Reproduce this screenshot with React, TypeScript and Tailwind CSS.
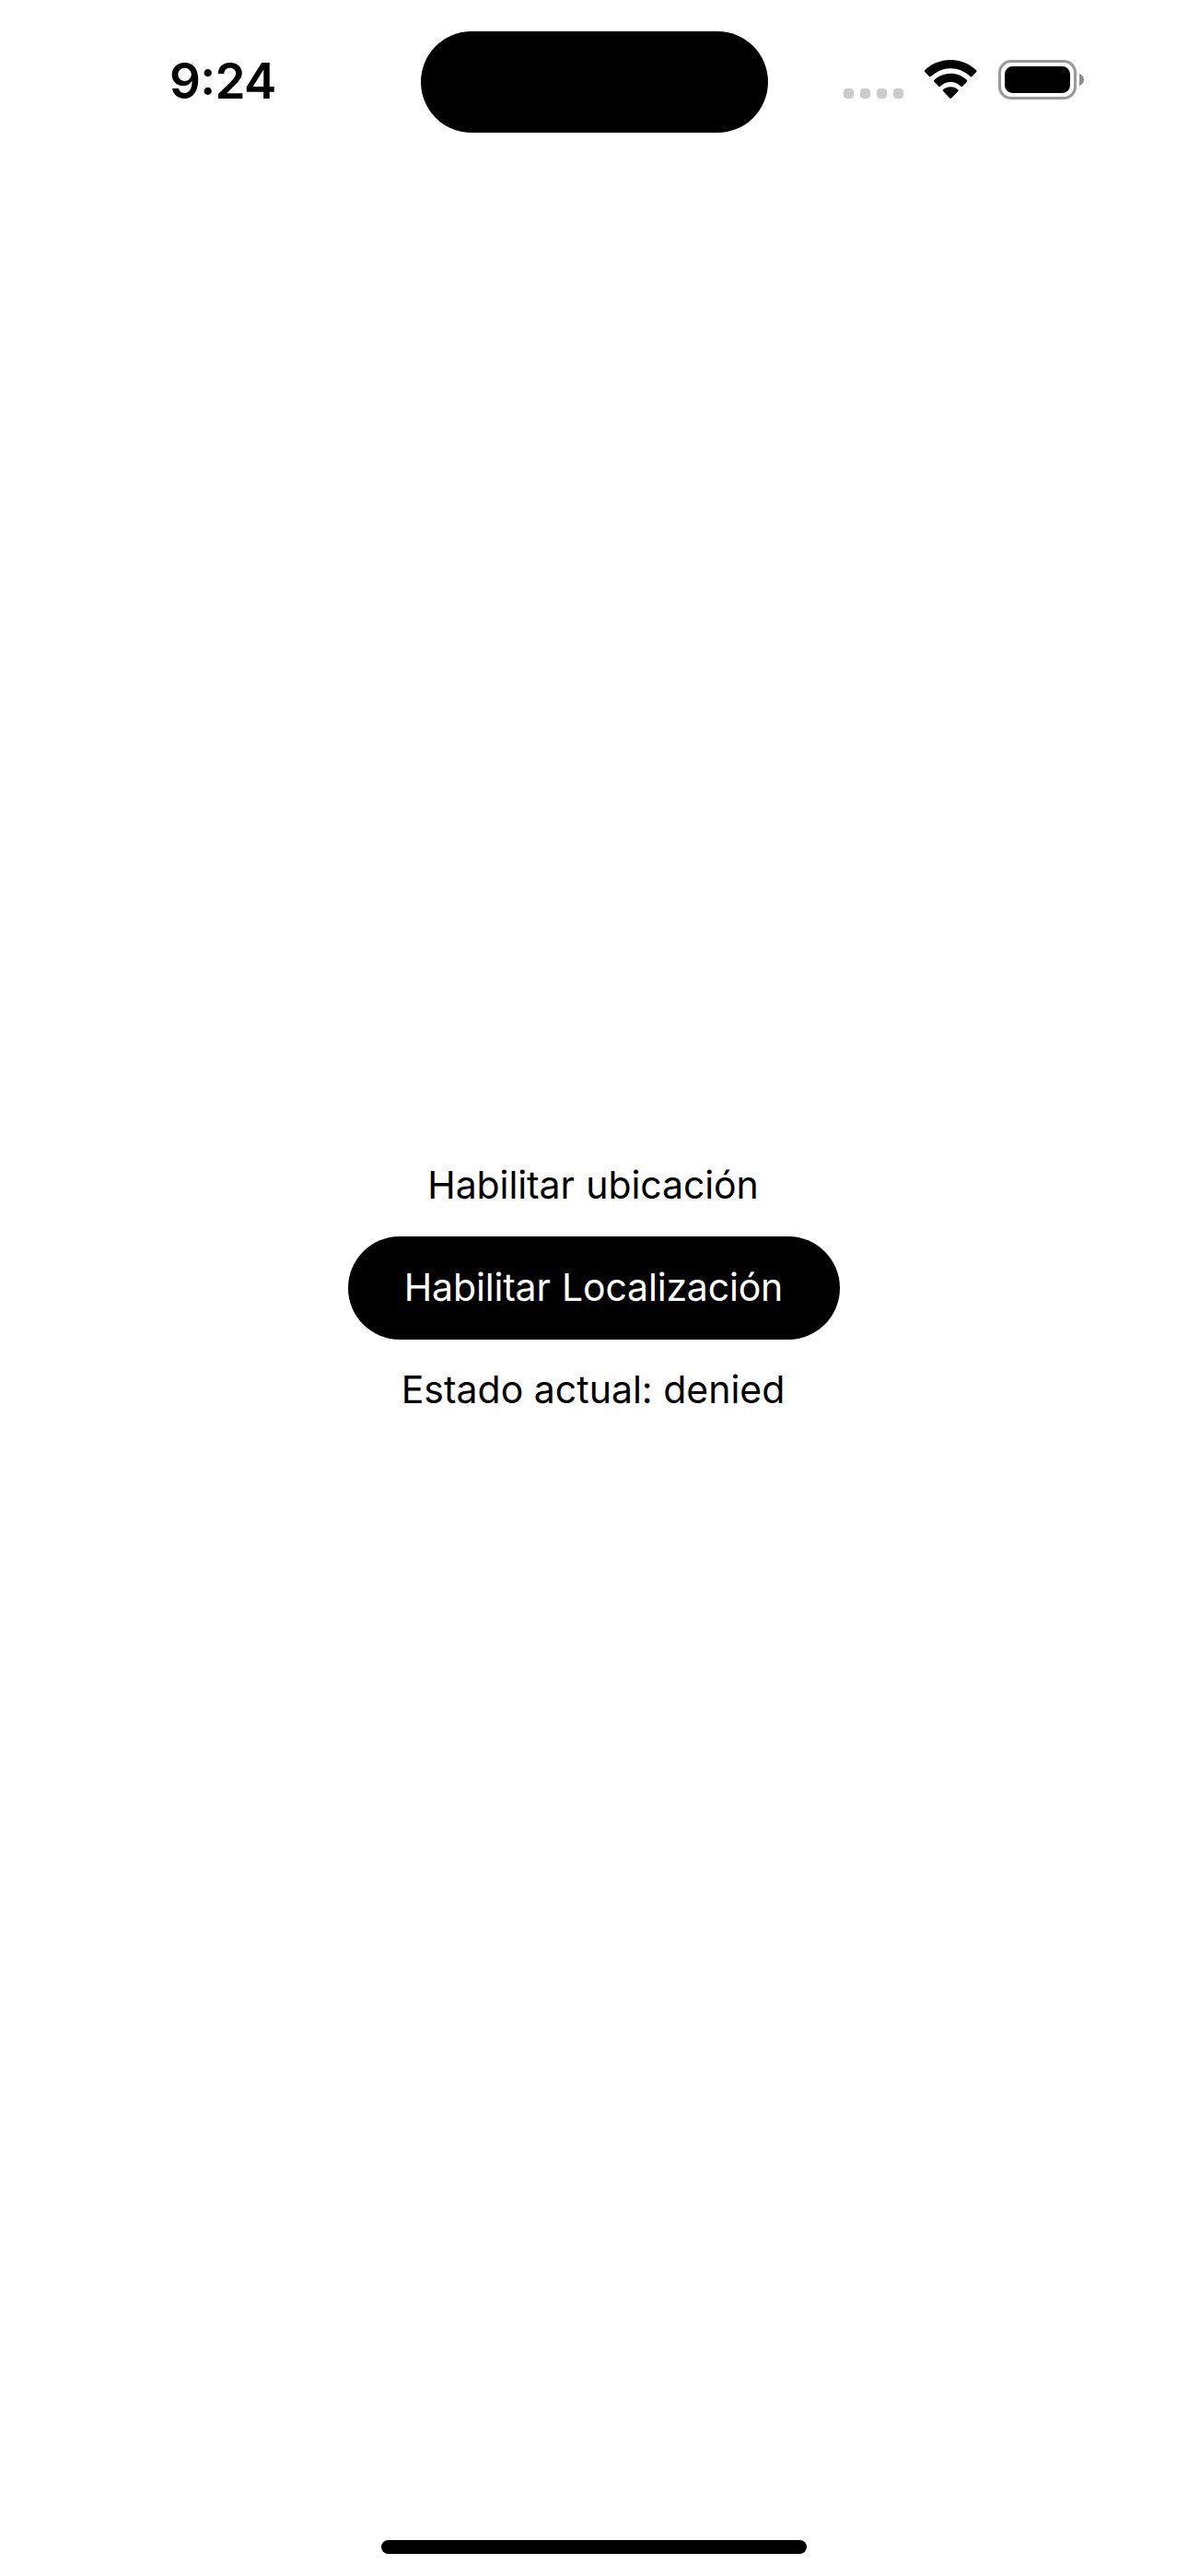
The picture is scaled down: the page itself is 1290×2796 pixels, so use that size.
function WifiIcon() {
  return (
    <svg className="mt-[65px] h-[42px] w-[58px]" viewBox="0 0 58 42" fill="#000">
      <path d="M29.2 0C39.8 0 49.7 4.1 57.2 11.2c.5.5.5 1.3 0 1.8L52.3 18c-.5.5-1.2.5-1.7 0C44.8 12.6 37.2 9.3 29.2 9.3S13.6 12.6 7.8 18c-.5.5-1.2.5-1.7 0L1.2 13c-.5-.5-.5-1.3 0-1.8C8.7 4.1 18.6 0 29.2 0Z" />
      <path d="M29.2 14.7c6.7 0 13 2.6 17.8 7.2.5.5.5 1.3 0 1.8L42.1 28.7c-.5.5-1.2.5-1.7 0C37.4 25.8 33.4 24 29.2 24S21 25.8 18 28.7c-.5.5-1.2.5-1.7 0L11.4 23.7c-.5-.5-.5-1.3 0-1.8 4.8-4.6 11.1-7.2 17.8-7.2Z" />
      <path d="M29.2 29.3c3 0 5.8 1.1 8.1 2.9.5.5.5 1.3 0 1.8L30.1 41.4c-.5.5-1.3.5-1.8 0L21.1 34c-.5-.5-.5-1.3 0-1.8 2.3-1.8 5.1-2.9 8.1-2.9Z" />
    </svg>
  );
}

function BatteryIcon() {
  return (
    <svg className="mt-[65px] h-[43px] w-[95px]" viewBox="0 0 95 43">
      <rect x="2.5" y="1.5" width="82" height="40" rx="12.5" fill="none" stroke="#999" strokeWidth="3" />
      <rect x="8" y="7" width="71" height="29" rx="8.5" fill="#000" />
      <path d="M89 15c3 1.1 5 3.6 5 6.6s-2 5.5-5 6.6Z" fill="#8c8c8c" />
    </svg>
  );
}

function StatusBar() {
  return (
    <header className="flex h-[177px] shrink-0 items-start">
      <time className="ml-[184px] mt-[57px] w-[116px] whitespace-nowrap text-[53px] font-semibold leading-[63px] tracking-[-0.7px]">
        9<span className="relative -top-[4.5px]">:</span>24
      </time>
      <div className="ml-[156.5px] mt-[33.5px] h-[110.5px] w-[377px] rounded-full bg-black" />
      <div className="ml-[82.5px] mt-[96px] flex gap-[7px]">
        {[0, 1, 2, 3].map((dot) => (
          <span key={dot} className="size-[11px] rounded-[4px] bg-[#cbcbcb]" />
        ))}
      </div>
      <div className="ml-[22px] flex gap-[22px]">
        <WifiIcon />
        <BatteryIcon />
      </div>
    </header>
  );
}

function LocationPermission() {
  return (
    <main className="mt-[1084px] flex flex-1 flex-col items-center text-[41px] leading-[50px]">
      <p className="mr-[2px] tracking-[-0.1px] [word-spacing:1px]">Habilitar ubicación</p>
      <button className="mt-[31px] h-[112px] w-[534px] rounded-full bg-black pb-[2px] pr-px tracking-[-0.18px] text-white [word-spacing:1px]">
        Habilitar Localización
      </button>
      <p className="mr-[2px] mt-[29px]">Estado actual: denied</p>
    </main>
  );
}

export default function App() {
  return (
    <div className="flex h-[2796px] w-[1290px] flex-col bg-white font-['Inter',sans-serif] text-black">
      <StatusBar />
      <LocationPermission />
      <div className="mx-auto mb-[24px] h-[15px] w-[462px] rounded-full bg-black" />
    </div>
  );
}
